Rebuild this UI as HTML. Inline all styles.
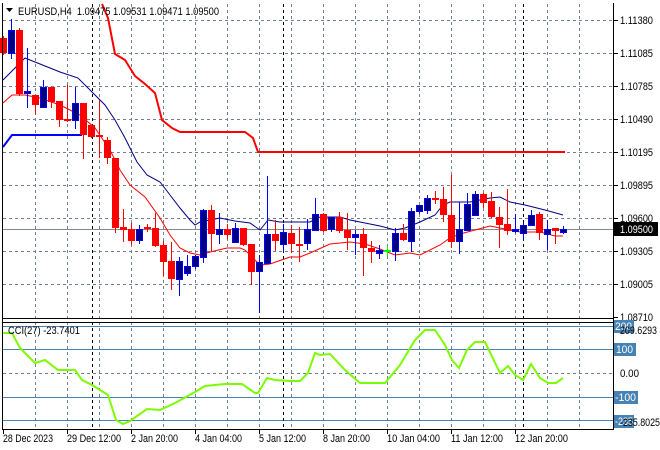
<!DOCTYPE html>
<html><head><meta charset="utf-8"><style>
html,body{margin:0;padding:0;background:#fff;width:660px;height:450px;overflow:hidden}
svg{display:block}
text{font-family:"Liberation Sans",sans-serif;font-size:11px;fill:#000}
</style></head><body>
<svg id="s" width="660" height="450" xmlns="http://www.w3.org/2000/svg">
<g id="grid" stroke="#708090" stroke-width="1" stroke-dasharray="3,3" fill="none"></g>
<g id="lv" stroke="#4682b4" stroke-width="1">
<line x1="3" y1="326.5" x2="613" y2="326.5"/><line x1="3" y1="349.5" x2="613" y2="349.5"/>
<line x1="3" y1="397.5" x2="613" y2="397.5"/><line x1="3" y1="420.5" x2="613" y2="420.5"/>
</g>
<g stroke="#000" stroke-width="1" stroke-dasharray="3,3">
<line x1="92.5" y1="4" x2="92.5" y2="429"/><line x1="283.5" y1="4" x2="283.5" y2="429"/><line x1="523.5" y1="4" x2="523.5" y2="429"/>
</g>
<line x1="3" y1="229.5" x2="613" y2="229.5" stroke="#808890" stroke-width="1"/>
<polyline fill="none" stroke="#f00" stroke-width="2" points="102,4 108,18 115,54 125,60 135,76 145,84 155,93 162,120 172,128 180,132 245,132 253,138 258,152 565,152"/>
<polyline fill="none" stroke="#00f" stroke-width="2" points="3,147 12,135 82,135"/>
<polyline fill="none" stroke="#000080" stroke-width="1" points="3,80 25,58 35,62 45,66 60,72 78,78 90,90 105,105 115,120 125,138 137,162 147,175 160,182 170,195 180,208 190,220 195,225 200,222 210,220 220,218 235,221 250,223 260,230 268,220 280,222 310,222 320,217 340,217 350,220 370,224 380,226 395,230 405,228 420,222 435,215 443,205 450,202 470,202 490,198 500,197 510,202 525,205 545,210 563,215"/>
<polyline fill="none" stroke="#f00" stroke-width="1" points="3,103 12,95 25,95 40,98 60,105 80,115 95,128 110,150 120,170 130,185 145,197 160,218 170,235 180,248 190,253 200,255 210,252 227,248 240,248 245,250 260,265 270,264 290,257 300,257 310,253 330,244 350,242 365,244 380,249 395,255 410,253 420,255 440,245 450,238 460,234 475,230 490,226 505,229 520,232 540,232 555,236 563,236"/>
<g id="c"></g>
<polyline fill="none" stroke="#7cfc00" stroke-width="2" points="3,333 12,333 20,348 35,363 45,360 58,370 75,370 82,380 92,385 100,390 108,395 116,420 123,424 130,421 147,409 160,410 175,403 195,392 205,386 225,384 242,384 255,393 258,393 267,378 275,380 290,381 300,381 308,373 315,353 320,355 330,354 345,370 360,383 385,383 400,365 415,340 425,330 435,330 445,345 452,360 459,368 467,350 475,342 485,342 500,373 508,366 515,375 523,380 531,364 540,378 548,383 556,383 563,378"/>
<g stroke="#000" stroke-width="1" fill="none">
<line x1="2.5" y1="3" x2="2.5" y2="430"/><line x1="613.5" y1="3" x2="613.5" y2="430"/>
<line x1="2" y1="318.5" x2="614" y2="318.5"/><line x1="2" y1="322.5" x2="614" y2="322.5"/><line x1="2" y1="429.5" x2="614" y2="429.5"/>
</g>
<g id="ticks" stroke="#000"></g>
<rect x="614" y="222" width="44" height="14" fill="#000"/>
<text x="620" y="233" textLength="33" lengthAdjust="spacingAndGlyphs" style="fill:#fff">1.09500</text>
<g id="pl"></g>
<rect x="614" y="320" width="20" height="13" fill="#4682b4"/><text x="615" y="330" textLength="17" lengthAdjust="spacingAndGlyphs" style="fill:#fff">200</text>
<text x="620" y="334" textLength="37" lengthAdjust="spacingAndGlyphs">209.6293</text>
<rect x="614" y="343" width="22" height="13" fill="#4682b4"/><text x="616" y="353" textLength="17" lengthAdjust="spacingAndGlyphs" style="fill:#fff">100</text>
<text x="620" y="377" textLength="19" lengthAdjust="spacingAndGlyphs">0.00</text>
<rect x="614" y="391" width="24" height="13" fill="#4682b4"/><text x="615" y="401" textLength="21" lengthAdjust="spacingAndGlyphs" style="fill:#fff">-100</text>
<rect x="614" y="415" width="20" height="13" fill="#4682b4"/><text x="615" y="425" textLength="18" lengthAdjust="spacingAndGlyphs" style="fill:#fff">-235</text>
<text x="620" y="426" textLength="40" lengthAdjust="spacingAndGlyphs">-235.8025</text>
<text x="8" y="334" textLength="72" lengthAdjust="spacingAndGlyphs">CCI(27) -23.7401</text>
<path d="M6,8 L13,8 L9.5,12 Z" fill="#000"/>
<text x="18" y="15" textLength="201" lengthAdjust="spacingAndGlyphs" xml:space="preserve">EURUSD,H4  1.09475 1.09531 1.09471 1.09500</text>
<g id="tl"></g>
</svg>
<script>
var NS="http://www.w3.org/2000/svg";
function el(p,n,a,t){var e=document.createElementNS(NS,n);for(var k in a)e.setAttribute(k,a[k]);if(t)e.textContent=t;document.getElementById(p).appendChild(e);}
var vx=[35,67,99,131,163,195,227,259,291,323,355,387,419,451,483,515,547,579];
vx.forEach(function(x){el("grid","line",{x1:x+.5,y1:4,x2:x+.5,y2:429});});
[20,53,86,119,152,185,218,251,284].forEach(function(y){el("grid","line",{x1:3,y1:y+.5,x2:613,y2:y+.5});});
el("grid","line",{x1:3,y1:373.5,x2:613,y2:373.5});
var pr=[["1.11380",20],["1.11085",53],["1.10785",86],["1.10490",119],["1.10195",152],["1.09895",185],["1.09600",218],["1.09305",251],["1.09005",284],["1.08710",317]];
pr.forEach(function(p){el("pl","text",{x:620,y:p[1]+4,textLength:33,lengthAdjust:"spacingAndGlyphs"},p[0]);el("ticks","line",{x1:614,y1:p[1]+.5,x2:618,y2:p[1]+.5});});
var tl=[["28 Dec 2023",3,50],["29 Dec 12:00",67,54],["2 Jan 20:00",131,47],["4 Jan 04:00",195,47],["5 Jan 12:00",259,47],["8 Jan 20:00",323,47],["10 Jan 04:00",387,53],["11 Jan 12:00",451,52],["12 Jan 20:00",515,53]];
tl.forEach(function(t){el("tl","text",{x:t[1],y:442,textLength:t[2],lengthAdjust:"spacingAndGlyphs"},t[0]);el("ticks","line",{x1:t[1]+.5,y1:430,x2:t[1]+.5,y2:434});});
var C=[["r",38,53,36,54],["b",30,53,19,58],["r",30,94,28,95],["b",91,93,48,107],["r",95,105,95,113],["b",87,107,80,107],["r",87,102,87,107],["r",101,120,101,126],["r",119,121,85,121],["b",103,120,87,128],
["r",103,135,103,158],["r",125,137,125,137],["r",135,137,100,157],["r",140,158,137,163],["r",158,228,158,232],["r",227,230,209,241],["r",229,241,223,244],["b",229,240,225,243],["r",227,229,224,231],["r",228,246,213,246],
["r",245,262,241,275],["r",261,279,242,289],["b",261,279,257,295],["b",266,273,255,275],["b",256,266,255,268],["b",210,257,209,262],["r",210,234,205,250],["b",229,234,213,243],["r",229,235,224,238],["b",228,242,223,242],
["r",228,245,228,245],["r",244,272,244,284],["b",262,271,255,312],["b",234,263,176,263],["r",234,241,220,250],["b",232,244,224,251],["r",233,244,225,252],["r",244,246,227,261],["b",229,243,219,249],["b",214,230,198,230],
["r",214,231,213,231],["b",217,229,217,231],["r",217,231,212,232],["r",230,238,213,249],["b",234,237,230,254],["r",234,248,228,275],["r",248,252,241,262],["b",250,253,245,258],["g",250,251,246,255],["b",233,251,228,260],
["r",233,240,224,240],["b",211,241,208,251],["b",205,211,205,213],["b",198,210,195,213],["r",198,200,191,203],["r",199,215,187,221],["r",215,242,175,247],["b",229,241,202,253],["b",204,230,193,230],["b",194,215,191,215],
["r",194,203,193,207],["r",201,217,192,217],["r",217,225,207,247],["r",224,231,189,234],["b",229,231,214,232],["b",225,233,223,240],["b",215,225,210,225],["r",214,233,212,239],["b",229,234,220,249],["r",228,231,228,243],["b",229,232,226,233]];
var col={r:"#f00",b:"#00f",g:"#0f0"},fill={r:"#f00",b:"#000080",g:"#0f0"};
C.forEach(function(c,i){var x=3+8*i;
el("c","line",{x1:x+.5,y1:c[3],x2:x+.5,y2:c[4]+1,stroke:col[c[0]],"stroke-width":1});
var h=Math.max(1,c[2]-c[1]);
if(c[0]=="b"){el("c","rect",{x:x-2.5,y:c[1]+.5,width:6,height:h,fill:fill.b,stroke:"#00f","stroke-width":1});}
else el("c","rect",{x:x-3,y:c[1],width:7,height:h+(h<2?1:0),fill:fill[c[0]]});
});
</script>
</body></html>
